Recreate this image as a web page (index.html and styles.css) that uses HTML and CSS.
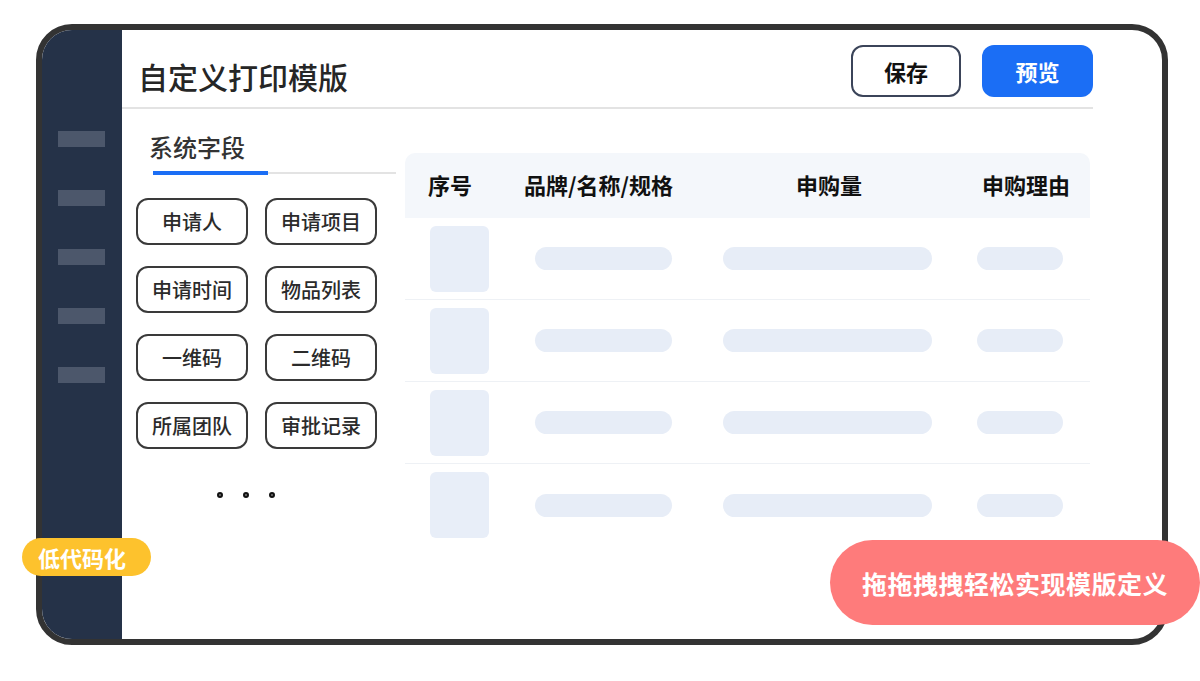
FILE: index.html
```html
<!DOCTYPE html>
<html lang="zh-CN">
<head>
    <meta charset="UTF-8">
    <meta name="viewport" content="width=device-width, initial-scale=1.0">
    <title>自定义打印模版</title>
    <link rel="stylesheet" href="styles.css">
</head>
<body>
    <div class="stage">
        <div class="frame">
            <div class="sidebar">
                <div class="side-item"></div>
                <div class="side-item"></div>
                <div class="side-item"></div>
                <div class="side-item"></div>
                <div class="side-item"></div>
            </div>

            <div class="main">
                <div class="header">
                    <h1 class="title">自定义打印模版</h1>
                    <button type="button" class="btn btn-save">保存</button>
                    <button type="button" class="btn btn-preview">预览</button>
                </div>

                <div class="content">
                    <div class="fields">
                        <div class="tab-title">系统字段</div>
                        <div class="tab-line"><div class="tab-active"></div></div>

                        <div class="chips">
                            <div class="chip">申请人</div>
                            <div class="chip">申请项目</div>
                            <div class="chip">申请时间</div>
                            <div class="chip">物品列表</div>
                            <div class="chip">一维码</div>
                            <div class="chip">二维码</div>
                            <div class="chip">所属团队</div>
                            <div class="chip">审批记录</div>
                        </div>

                        <div class="dots">
                            <span class="dot"></span>
                            <span class="dot"></span>
                            <span class="dot"></span>
                        </div>
                    </div>

                    <div class="table">
                        <div class="table-head">
                            <div class="cell c1">序号</div>
                            <div class="cell c2">品牌/名称/规格</div>
                            <div class="cell c3">申购量</div>
                            <div class="cell c4">申购理由</div>
                        </div>
                        <div class="table-row">
                            <div class="cell c1"><div class="thumb"></div></div>
                            <div class="cell c2"><div class="bar bar-name"></div></div>
                            <div class="cell c3"><div class="bar bar-qty"></div></div>
                            <div class="cell c4"><div class="bar bar-reason"></div></div>
                        </div>
                        <div class="table-row">
                            <div class="cell c1"><div class="thumb"></div></div>
                            <div class="cell c2"><div class="bar bar-name"></div></div>
                            <div class="cell c3"><div class="bar bar-qty"></div></div>
                            <div class="cell c4"><div class="bar bar-reason"></div></div>
                        </div>
                        <div class="table-row">
                            <div class="cell c1"><div class="thumb"></div></div>
                            <div class="cell c2"><div class="bar bar-name"></div></div>
                            <div class="cell c3"><div class="bar bar-qty"></div></div>
                            <div class="cell c4"><div class="bar bar-reason"></div></div>
                        </div>
                        <div class="table-row last">
                            <div class="cell c1"><div class="thumb"></div></div>
                            <div class="cell c2"><div class="bar bar-name"></div></div>
                            <div class="cell c3"><div class="bar bar-qty"></div></div>
                            <div class="cell c4"><div class="bar bar-reason"></div></div>
                        </div>
                    </div>
                </div>
            </div>
        </div>

        <div class="tag tag-lowcode">低代码化</div>
        <div class="tag tag-drag">拖拖拽拽轻松实现模版定义</div>
    </div>
</body>
</html>
```

FILE: styles.css
```css
body {
    font-family: "Noto Sans CJK SC", "Noto Sans", sans-serif;
    background-color: #fff;
    margin: 0;
    padding: 0;
}

.stage {
    position: relative;
    width: 1200px;
    height: 681px;
    overflow: hidden;
}

.frame {
    display: flex;
    box-sizing: border-box;
    width: 1132px;
    height: 621px;
    margin: 24px 0 0 36px;
    border: 6px solid #333;
    border-radius: 36px;
    overflow: hidden;
    background-color: #fff;
}

/* left dark menu */
.sidebar {
    width: 80px;
    flex-shrink: 0;
    background-color: #253248;
    padding: 101px 0 0 16px;
    box-sizing: border-box;
    display: flex;
    flex-direction: column;
    gap: 43px;
}

.side-item {
    width: 47px;
    height: 16px;
    background-color: #4c576b;
}

.main {
    flex: 1;
    display: flex;
    flex-direction: column;
}

.header {
    display: flex;
    align-items: center;
    gap: 21px;
    margin-right: 69px;
    padding: 15px 0 10px;
    border-bottom: 2px solid #e3e3e3;
}

.title {
    flex: 1;
    margin: 10px 0 0;
    padding-left: 16px;
    font-size: 30px;
    line-height: 30px;
    font-weight: 500;
    color: #262626;
}

.btn {
    box-sizing: border-box;
    width: 110px;
    height: 52px;
    border-radius: 12px;
    font-family: inherit;
    font-size: 22px;
    font-weight: bold;
    cursor: pointer;
}

.btn-save {
    background-color: #fff;
    border: 2px solid #3b4459;
    color: #111;
}

.btn-preview {
    width: 111px;
    background-color: #1b6ef5;
    border: none;
    color: #fff;
}

.content {
    display: flex;
    align-items: flex-start;
}

/* field list */
.fields {
    width: 260px;
    margin-left: 14px;
}

.tab-title {
    margin-top: 25px;
    padding-left: 13px;
    font-size: 24px;
    line-height: 26px;
    font-weight: 500;
    color: #333;
}

.tab-line {
    width: 243px;
    height: 2px;
    margin: 12px 0 0 17px;
    background-color: #e3e3e3;
}

.tab-active {
    width: 115px;
    height: 4px;
    position: relative;
    top: -1px;
    background-color: #1b6ef5;
}

.chips {
    display: grid;
    grid-template-columns: 112px 112px;
    column-gap: 17px;
    row-gap: 21px;
    margin-top: 24px;
}

.chip {
    box-sizing: border-box;
    height: 47px;
    border: 2px solid #3a3a3a;
    border-radius: 12px;
    display: flex;
    align-items: center;
    justify-content: center;
    font-size: 20px;
    font-weight: 500;
    color: #2b2b2b;
}

.dots {
    display: flex;
    gap: 20px;
    margin-top: 43px;
    padding-left: 81px;
}

.dot {
    box-sizing: border-box;
    width: 6px;
    height: 6px;
    border-radius: 50%;
    border: 2px solid #111;
    background-color: #777;
}

/* placeholder table */
.table {
    width: 685px;
    margin: 44px 0 0 9px;
}

.table-head,
.table-row {
    display: grid;
    grid-template-columns: 105px 190px 255px 135px;
    align-items: center;
}

.table-head {
    height: 65px;
    padding-bottom: 3px;
    box-sizing: border-box;
    background-color: #f4f7fb;
    border-radius: 10px 10px 0 0;
    font-size: 22px;
    font-weight: bold;
    color: #111;
}

.table-row {
    height: 82px;
    border-bottom: 1px solid #eef1f5;
    box-sizing: border-box;
}

.table-row.last {
    border-bottom: none;
}

.table-head .c1 { padding-left: 23px; }
.table-head .c2 { padding-left: 14px; }
.table-head .c3 { padding-left: 96px; }
.table-head .c4 { padding-left: 27px; }

.table-row .c1 { padding-left: 25px; }
.table-row .c2 { padding-left: 25px; }
.table-row .c3 { padding-left: 23px; }
.table-row .c4 { padding-left: 22px; }

.thumb {
    width: 59px;
    height: 66px;
    border-radius: 6px;
    background-color: #e8eef8;
}

.bar {
    height: 23px;
    border-radius: 12px;
    background-color: #e7edf7;
}

.bar-name { width: 137px; }
.bar-qty { width: 209px; }
.bar-reason { width: 86px; }

/* floating labels */
.tag {
    position: absolute;
    color: #fff;
    font-weight: bold;
    white-space: nowrap;
    display: flex;
    align-items: center;
}

.tag-lowcode {
    left: 22px;
    top: 538px;
    width: 129px;
    height: 38px;
    box-sizing: border-box;
    padding-left: 16px;
    border-radius: 19px;
    background-color: #fdc22d;
    font-size: 22px;
}

.tag-drag {
    left: 830px;
    top: 540px;
    width: 370px;
    height: 85px;
    box-sizing: border-box;
    padding-left: 32px;
    border-radius: 43px;
    background-color: #fe7b7b;
    font-size: 25px;
    letter-spacing: 0.5px;
}
```
